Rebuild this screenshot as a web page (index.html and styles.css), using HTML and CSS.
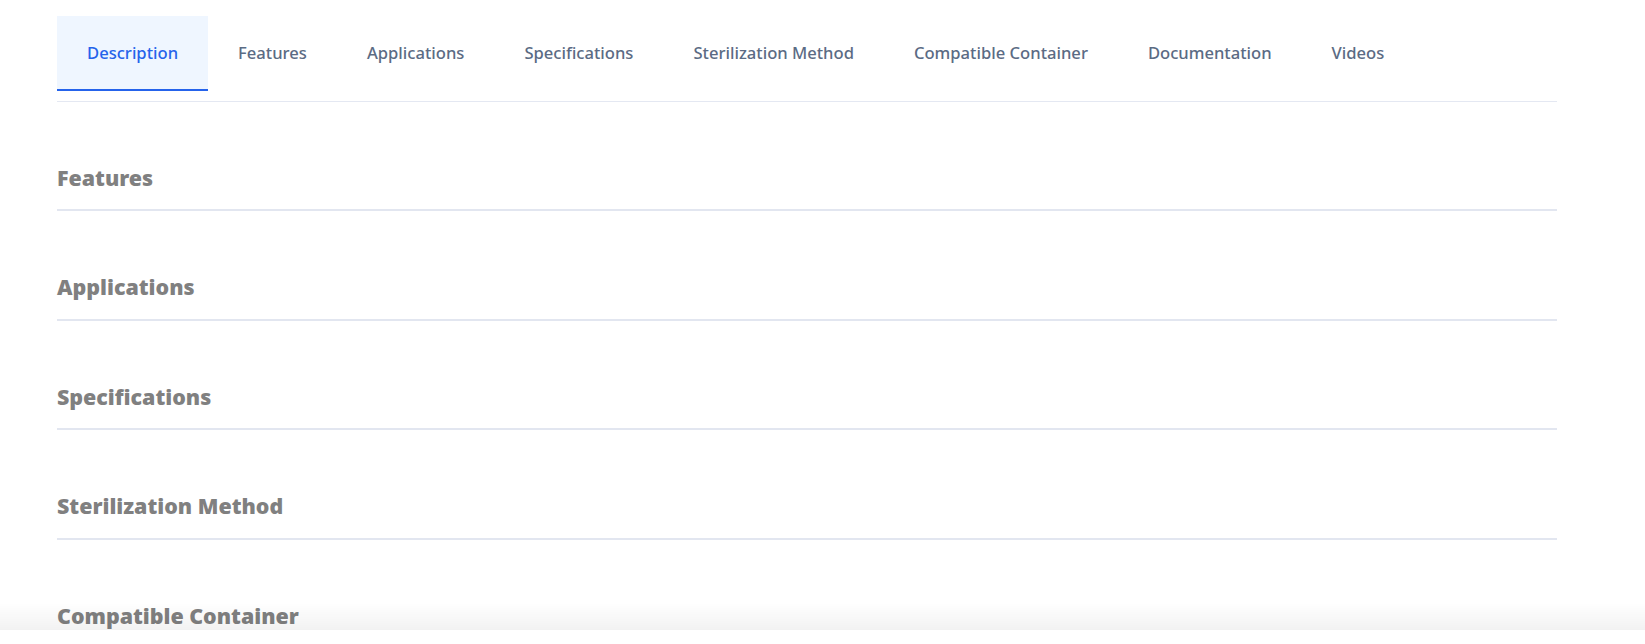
FILE: index.html
```html
<!DOCTYPE html>
<html lang="en">
<head>
<meta charset="utf-8">
<title>Product details</title>
<link rel="stylesheet" href="styles.css">
</head>
<body>
<div class="page">
  <nav class="tabs">
    <a class="tab active">Description</a>
    <a class="tab">Features</a>
    <a class="tab">Applications</a>
    <a class="tab">Specifications</a>
    <a class="tab">Sterilization Method</a>
    <a class="tab">Compatible Container</a>
    <a class="tab">Documentation</a>
    <a class="tab">Videos</a>
  </nav>
  <section class="section"><h2 class="section-title">Features</h2></section>
  <section class="section"><h2 class="section-title">Applications</h2></section>
  <section class="section"><h2 class="section-title">Specifications</h2></section>
  <section class="section"><h2 class="section-title">Sterilization Method</h2></section>
  <section class="section"><h2 class="section-title">Compatible Container</h2></section>
</div>
<div class="bottom-fade"></div>
</body>
</html>
```
FILE: styles.css
```css
html, body {
  margin: 0;
  padding: 0;
  background: #ffffff;
}
body {
  font-family: "Noto Sans", "Open Sans", sans-serif;
}
.page {
  width: 1500px;
  margin-left: 57px;
  padding-top: 16px;
}
.tabs {
  display: flex;
  padding-bottom: 10px;
  border-bottom: 1px solid #e4e8f2;
}
.tab {
  display: flex;
  align-items: center;
  height: 73px;
  padding: 0 30px;
  border-bottom: 2px solid transparent;
  font-size: 16.6px;
  font-weight: 500;
  color: #5b6b84;
  white-space: nowrap;
  cursor: pointer;
}
.tab.active {
  background: #eff6ff;
  color: #2563eb;
  border-bottom-color: #2563eb;
}
.section {
  padding: 61px 0 16.4px;
  border-bottom: 2px solid #e2e6f0;
}
.section-title {
  margin: 0;
  font-size: 21.4px;
  line-height: 30px;
  font-weight: 900;
  color: #808080;
}
.bottom-fade {
  position: fixed;
  left: 0;
  right: 0;
  bottom: 14px;
  height: 27px;
  background: linear-gradient(to bottom, rgba(0,0,0,0), rgba(0,0,0,0.05));
  pointer-events: none;
}
```
